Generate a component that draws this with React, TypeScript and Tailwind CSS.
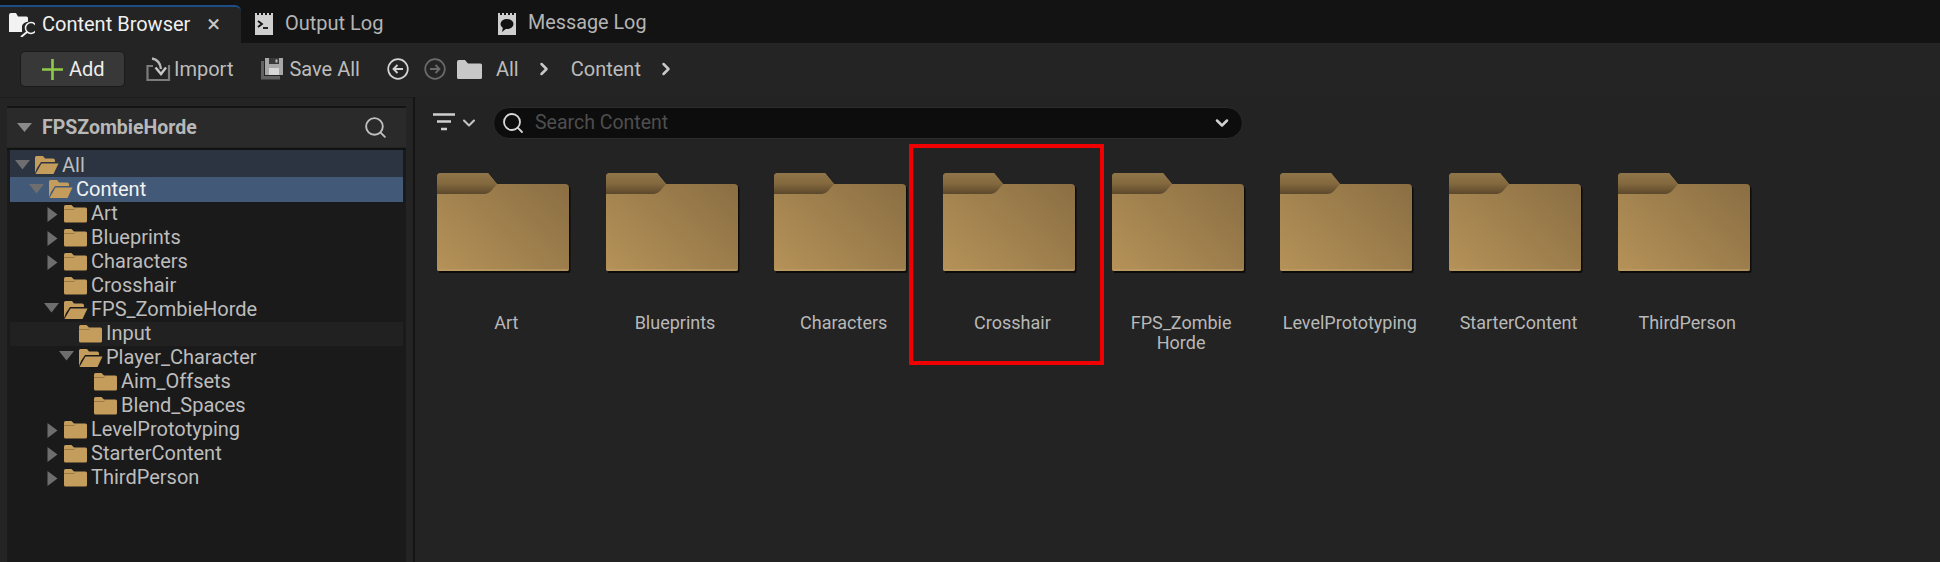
import React from 'react';
import { ChevronDown, ChevronRight, Search } from 'lucide-react';

const tree = [
  { name: 'Art', depth: 2, arrow: 'right', open: false },
  { name: 'Blueprints', depth: 2, arrow: 'right', open: false },
  { name: 'Characters', depth: 2, arrow: 'right', open: false },
  { name: 'Crosshair', depth: 2, arrow: 'none', open: false },
  { name: 'FPS_ZombieHorde', depth: 2, arrow: 'down', open: true },
  { name: 'Input', depth: 3, arrow: 'none', open: false, hover: true },
  { name: 'Player_Character', depth: 3, arrow: 'down', open: true },
  { name: 'Aim_Offsets', depth: 4, arrow: 'none', open: false },
  { name: 'Blend_Spaces', depth: 4, arrow: 'none', open: false },
  { name: 'LevelPrototyping', depth: 2, arrow: 'right', open: false },
  { name: 'StarterContent', depth: 2, arrow: 'right', open: false },
  { name: 'ThirdPerson', depth: 2, arrow: 'right', open: false },
];

const folders = ['Art', 'Blueprints', 'Characters', 'Crosshair', 'FPS_Zombie Horde', 'LevelPrototyping', 'StarterContent', 'ThirdPerson'];

function SmallFolder({ open }: { open: boolean }) {
  if (open) {
    return (
      <svg width="25" height="20" viewBox="0 0 25 20" className="shrink-0">
        <path d="M1 18V2.500Q1 1 2.500 1H9l2 2.500h8Q21 3.500 21 5.500V7H7L3 13Z" fill="#c49c5c" />
        <path d="M7.500 8.500H24.500L19.500 19H1.500Z" fill="#c49c5c" />
      </svg>
    );
  }
  return (
    <svg width="25" height="19" viewBox="0 0 25 19" className="shrink-0">
      <path d="M1 3Q1 1 2.500 1H8.500L11 3.500H22.500Q24 3.500 24 5V17Q24 18.500 22.500 18.500H2.500Q1 18.500 1 17Z" fill="#c49c5c" />
      <path d="M1 5.500H11L12 4.500" stroke="#8a6c3c" strokeWidth="0.7" fill="none" />
    </svg>
  );
}

function Arrow({ kind }: { kind: string }) {
  if (kind === 'down') {
    return (
      <svg width="15" height="10" viewBox="0 0 15 10" className="shrink-0">
        <path d="M0 0H15L7.500 9.500Z" fill="#6e6e6e" />
      </svg>
    );
  }
  if (kind === 'right') {
    return (
      <svg width="11" height="15" viewBox="0 0 11 15" className="shrink-0">
        <path d="M0.500 0V15L10.500 7.500Z" fill="#6e6e6e" />
      </svg>
    );
  }
  return null;
}

function BigFolder({ id }: { id: number }) {
  return (
    <svg width="139" height="102" viewBox="0 0 139 102" className="block">
      <defs>
        <linearGradient id={`body${id}`} x1="0" y1="1" x2="1" y2="0.2">
          <stop offset="0" stopColor="#b59258" />
          <stop offset="1" stopColor="#8c7044" />
        </linearGradient>
        <linearGradient id={`flap${id}`} x1="0" y1="0" x2="0" y2="1">
          <stop offset="0" stopColor="#8f7549" />
          <stop offset="0.5" stopColor="#84693f" />
          <stop offset="1" stopColor="#5c482b" />
        </linearGradient>
      </defs>
      <path d="M2 13H130Q133.500 13 133.500 16V98Q133.500 100 131.500 100H2Z" fill="#0c0a06" opacity="0.9" />
      <path d="M0 21V4Q0 0 4 0H51L60 11H128Q132 11 132 15V96Q132 98 130 98H2Q0 98 0 96Z" fill={`url(#body${id})`} />
      <path d="M0 21V4Q0 0 4 0H51L60 11L54 18Q51 21 48 21Z" fill={`url(#flap${id})`} />
      <path d="M0 96H132V96Q132 98 130 98H2Q0 98 0 96Z" fill="#c2a26c" opacity="0.5" />
    </svg>
  );
}

function ContentBrowserIcon() {
  return (
    <svg width="26" height="26" viewBox="0 0 26 26" className="shrink-0">
      <path d="M0 4V21H13V15Q14 11 20 10.500H19V7Q19 5.500 17.500 5.500H9L7 2H2Q0 2 0 4Z" fill="#f2f2f2" />
      <circle cx="22" cy="17" r="5.500" fill="none" stroke="#f2f2f2" strokeWidth="1.500" />
      <path d="M18 21L12 26" stroke="#f2f2f2" strokeWidth="2" />
    </svg>
  );
}

function OutputLogIcon() {
  return (
    <svg width="18" height="24" viewBox="0 0 18 24" className="shrink-0">
      <path d="M0 2H2V4H4V2H6V4H8V2H10V4H12V2H14V4H16V2H18V24H0Z" fill="#cfcfcf" />
      <path d="M3 10L7 13L3 16" fill="none" stroke="#111" strokeWidth="1.800" />
      <path d="M8 17H13" stroke="#111" strokeWidth="1.800" />
    </svg>
  );
}

function MessageLogIcon() {
  return (
    <svg width="18" height="24" viewBox="0 0 18 24" className="shrink-0">
      <path d="M0 2H2V4H4V2H6V4H8V2H10V4H12V2H14V4H16V2H18V24H0Z" fill="#cfcfcf" />
      <ellipse cx="9" cy="13" rx="6.500" ry="5" fill="#111" />
      <path d="M5 16L4 21L9 17Z" fill="#111" />
    </svg>
  );
}

function ImportIcon() {
  return (
    <svg width="25" height="24" viewBox="0 0 25 24" className="shrink-0">
      <path d="M6 1.500Q14 3 15 12" fill="none" stroke="#b8b8b8" strokeWidth="2.400" />
      <path d="M9.500 10.500L15 17L20 10.500" fill="none" stroke="#c8c8c8" strokeWidth="2.400" />
      <path d="M7 9H1.500V23H23V9H22" fill="none" stroke="#7c7c7c" strokeWidth="2.200" />
    </svg>
  );
}

function SaveIcon() {
  return (
    <svg width="23" height="22" viewBox="0 0 23 22" className="shrink-0">
      <path d="M0 3H3V18H19V21.500H0Z" fill="#626262" />
      <path d="M4 0H22V17H4Z" fill="#a8a8a8" />
      <path d="M8 0H18V6H8Z" fill="#3a3a3a" />
      <path d="M14.500 1.500H16.500V4.500H14.500Z" fill="#bdbdbd" />
      <path d="M8 10H18V17H8Z" fill="#d8d8d8" />
    </svg>
  );
}

function CircleArrow({ dir, color }: { dir: 'left' | 'right'; color: string }) {
  return (
    <svg width="22" height="22" viewBox="0 0 22 22" className="shrink-0">
      <circle cx="11" cy="11" r="9.800" fill="none" stroke={color} strokeWidth="1.700" />
      {dir === 'left' ? (
        <path d="M16 11H6.500M10.500 7L6.500 11L10.500 15" fill="none" stroke={color} strokeWidth="1.800" />
      ) : (
        <path d="M6 11H15.500M11.500 7L15.500 11L11.500 15" fill="none" stroke={color} strokeWidth="1.800" />
      )}
    </svg>
  );
}

function FilterIcon() {
  return (
    <svg width="22" height="20" viewBox="0 0 22 20" className="shrink-0">
      <path d="M0 1.500H22M4 8.500H18M8 16H14" stroke="#cfcfcf" strokeWidth="2.400" />
    </svg>
  );
}

export default function App() {
  return (
    <div className="w-[1940px] h-[562px] overflow-hidden bg-[#232323] font-['Roboto',sans-serif] text-[#c0c0c0] flex flex-col">
      {/* tabs */}
      <div className="h-[43px] bg-[#131313] flex items-end shrink-0">
        <div className="w-[241px] h-[38px] bg-[#242424] border-t-2 border-[#1d4f86] rounded-tr-md flex items-center pl-[9px] pb-[3px] text-[#f0f0f0]">
          <ContentBrowserIcon />
          <span className="ml-[7px] text-[20px] leading-none">Content Browser</span>
          <span className="ml-[17px] text-[24px] leading-none text-[#c8c8c8]">×</span>
        </div>
        <div className="h-[38px] flex items-center pb-[3px] ml-[14px] w-[243px]">
          <OutputLogIcon />
          <span className="ml-[12px] text-[20px] leading-none text-[#b4b4b4]">Output Log</span>
        </div>
        <div className="h-[38px] flex items-center pb-[3px]">
          <MessageLogIcon />
          <span className="ml-[12px] text-[19.800px] leading-none text-[#b4b4b4]">Message Log</span>
        </div>
      </div>

      {/* toolbar */}
      <div className="h-[54px] bg-[#242424] flex items-center pb-[2px] shrink-0 text-[20px] text-[#bcbcbc]">
        <div className="ml-[20px] w-[105px] h-[36px] bg-[#383838] border border-[#1a1a1a] rounded-[5px] flex items-center pl-[21px] text-[#ededed]">
          <svg width="21" height="21" viewBox="0 0 21 21" className="shrink-0">
            <path d="M10.500 0V21M0 10.500H21" stroke="#8fc94a" strokeWidth="2.600" />
          </svg>
          <span className="ml-[6px] leading-none">Add</span>
        </div>
        <div className="ml-[21px]"><ImportIcon /></div>
        <span className="ml-[3px] leading-none">Import</span>
        <div className="ml-[28px]"><SaveIcon /></div>
        <span className="ml-[5px] leading-none">Save All</span>
        <div className="ml-[27px]"><CircleArrow dir="left" color="#d4d4d4" /></div>
        <div className="ml-[15px]"><CircleArrow dir="right" color="#6a6a6a" /></div>
        <svg width="25" height="19" viewBox="0 0 25 19" className="shrink-0 ml-[11px]">
          <path d="M0 2Q0 0 2 0H8L11 3.500H23.500Q25 3.500 25 5V17.500Q25 19 23.500 19H1.500Q0 19 0 17.500Z" fill="#c8c8c8" />
        </svg>
        <span className="ml-[14px] leading-none">All</span>
        <ChevronRight size={20} strokeWidth={3} className="ml-[15px] text-[#c8c8c8]" />
        <span className="ml-[17px] leading-none">Content</span>
        <ChevronRight size={20} strokeWidth={3} className="ml-[15px] text-[#c8c8c8]" />
      </div>

      <div className="flex-1 flex min-h-0">
        {/* sources panel */}
        <div className="w-[413px] shrink-0 bg-[#242424] px-[7px] pt-[8px] flex flex-col border-t border-[#1c1c1c]">
          <div className="border-t-2 border-[#141414] h-[41px] bg-[#2a2a2a] flex items-center pl-[10px] pr-[18px] shrink-0">
            <svg width="15" height="9" viewBox="0 0 15 9" className="shrink-0">
              <path d="M0 0H15L7.500 9Z" fill="#8a8a8a" />
            </svg>
            <span className="ml-[10px] text-[19.500px] font-bold leading-none text-[#b8b8b8]">FPSZombieHorde</span>
            <Search size={25} strokeWidth={1.800} className="ml-auto text-[#c0c0c0]" />
          </div>
          <div className="flex-1 mt-[1px] bg-[#1a1a1a] border-t-2 border-[#121212] px-[3px] text-[20px] leading-none text-[#bdbdbd]">
            <div className="h-[27px] bg-[#2b3440] flex items-center pt-[3px] pl-[5px]">
              <Arrow kind="down" />
              <div className="ml-[4px]"><SmallFolder open /></div>
              <span className="ml-[3px]">All</span>
            </div>
            <div className="h-[24.500px] bg-[#425a78] flex items-center pb-[1px] pl-[19px] text-[#f2f2f2]">
              <Arrow kind="down" />
              <div className="ml-[4px]"><SmallFolder open /></div>
              <span className="ml-[3px]">Content</span>
            </div>
            {tree.map(row => (
              <div
                key={row.name}
                className={`h-[24px] flex items-center relative ${row.hover ? 'bg-[#212121]' : ''}`}
                style={{ paddingLeft: 53 + (row.depth - 2) * 15 }}
              >
                <div className="absolute top-[5px]" style={{ left: row.arrow === 'down' ? 34 + (row.depth - 2) * 15 : 37 + (row.depth - 2) * 15 }}>
                  <Arrow kind={row.arrow} />
                </div>
                <SmallFolder open={row.open} />
                <span className="ml-[3px] pb-[1px]">{row.name}</span>
              </div>
            ))}
          </div>
        </div>

        <div className="w-[2px] shrink-0 bg-[#141414]" />

        {/* asset view */}
        <div className="flex-1 min-w-0 flex flex-col">
          <div className="h-[45px] flex items-end pl-[18px] shrink-0 pb-[3px]">
            <div className="h-[32px] flex items-center">
              <FilterIcon />
              <ChevronDown size={20} strokeWidth={2.500} className="ml-[4px] text-[#c4c4c4]" />
            </div>
            <div className="ml-[14px] w-[750px] h-[32px] bg-[#0d0d0d] border border-[#2c2c2c] rounded-full flex items-center pl-[7px] pr-[10px]">
              <Search size={24} strokeWidth={1.800} className="text-[#d8d8d8]" />
              <span className="ml-[10px] text-[19.500px] leading-none text-[#4e4e4e]">Search Content</span>
              <ChevronDown size={20} strokeWidth={3} className="ml-auto text-[#d0d0d0]" />
            </div>
          </div>
          <div className="flex pl-[7px] pt-[31px]">
            {folders.map((f, i) => (
              <div key={f} className="w-[168.700px] shrink-0 flex flex-col items-center relative">
                <BigFolder id={i} />
                <div className="mt-[38px] w-[140px] text-center text-[18px] leading-[20px] text-[#b8b8b8]">{f}</div>
                {f === 'Crosshair' && (
                  <div className="absolute z-10 left-[-19px] top-[-29px] w-[195px] h-[221px] border-[4px] border-[#f00000]" />
                )}
              </div>
            ))}
          </div>
        </div>
      </div>
    </div>
  );
}
